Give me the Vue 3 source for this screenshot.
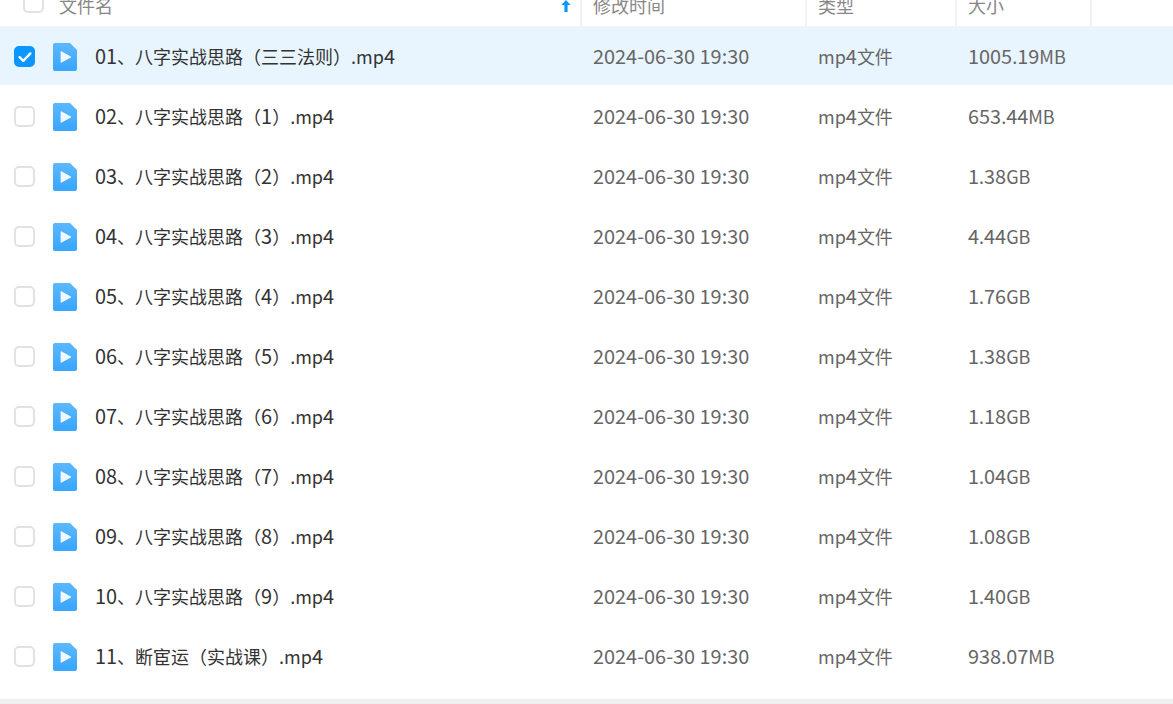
<script setup>
const names = [
  '01、八字实战思路（三三法则）.mp4',
  '02、八字实战思路（1）.mp4',
  '03、八字实战思路（2）.mp4',
  '04、八字实战思路（3）.mp4',
  '05、八字实战思路（4）.mp4',
  '06、八字实战思路（5）.mp4',
  '07、八字实战思路（6）.mp4',
  '08、八字实战思路（7）.mp4',
  '09、八字实战思路（8）.mp4',
  '10、八字实战思路（9）.mp4',
  '11、断宦运（实战课）.mp4'
]
const sizes = ['1005.19MB','653.44MB','1.38GB','4.44GB','1.76GB','1.38GB','1.18GB','1.04GB','1.08GB','1.40GB','938.07MB']
const split = (s) => s.split(/([0-9:\- ]+)/).filter(Boolean).map((t) => ({ t, num: /^[0-9:\- ]/.test(t) }))
const rows = names.map((name, i) => ({ key: name, name: split(name), size: split(sizes[i]), selected: i === 0 }))
const time = split('2024-06-30 19:30')
const type = split('mp4文件')
</script>

<template>
  <div class="page">
    <div class="head">
      <div class="h-name">
        <span class="box head-box"></span>
        <span class="h-label">文件名</span>
        <svg class="sort" width="10" height="12" viewBox="0 0 10 12"><path d="M5 0 L9.6 5 H6.6 V12 H3.4 V5 H.4 Z" fill="#0a97ff"/></svg>
      </div>
      <div class="h-cell w-time">修改时间</div>
      <div class="h-cell w-type">类型</div>
      <div class="h-cell w-size">大小</div>
    </div>
    <div class="list">
      <div v-for="r in rows" :key="r.key" class="row" :class="{ sel: r.selected }">
        <span class="box" :class="{ on: r.selected }">
          <svg v-if="r.selected" width="16" height="14" viewBox="0 0 16 14"><path d="M2.6 7.2 L6.3 10.8 L13.4 3.4" fill="none" stroke="#fff" stroke-width="2.4" stroke-linecap="round" stroke-linejoin="round"/></svg>
        </span>
        <svg class="file" width="24" height="28" viewBox="0 0 24 28">
          <defs><linearGradient id="g" x1="0" y1="0" x2="0" y2="1"><stop offset="0" stop-color="#5cb8ff"/><stop offset="1" stop-color="#38a5ff"/></linearGradient></defs>
          <path d="M2 0 H17 L24 7 V26 a2 2 0 0 1-2 2 H2 a2 2 0 0 1-2-2 V2 a2 2 0 0 1 2-2 Z" fill="url(#g)"/>
          <path d="M8 8.6 L18 14 L8 19.4 Z" fill="#fff" opacity=".92" stroke="#fff" stroke-width=".8" stroke-linejoin="round"/>
        </svg>
        <span class="name"><span v-for="(s, i) in r.name" :key="i" :class="{ num: s.num }">{{ s.t }}</span></span>
        <span class="cell w-time"><span v-for="(s, i) in time" :key="i" :class="{ num: s.num }">{{ s.t }}</span></span>
        <span class="cell w-type"><span v-for="(s, i) in type" :key="i" :class="{ num: s.num }">{{ s.t }}</span></span>
        <span class="cell w-size"><span v-for="(s, i) in r.size" :key="i" :class="{ num: s.num }">{{ s.t }}</span></span>
      </div>
    </div>
    <div class="foot"></div>
  </div>
</template>

<style scoped>
.page { width: 1173px; height: 704px; overflow: hidden; background: #fff; font-family: "Noto Sans CJK SC", "Noto Sans", sans-serif; display: flex; flex-direction: column; }
.head { height: 27px; flex: none; display: flex; overflow: hidden; color: #888; font-size: 18px; line-height: 26px; box-sizing: border-box; border-bottom: 1px solid #f4f4f4; }
.h-name { width: 580px; flex: none; display: flex; align-items: flex-start; position: relative; }
.head-box { margin: -8px 0 0 23px; }
.h-label { margin: -8px 0 0 15px; }
.sort { position: absolute; left: 561px; top: 0; }
.h-cell { box-sizing: border-box; flex: none; border-left: 2px solid #f2f2f2; margin-top: -8px; height: 34px; }
.head .w-time { width: 225px; padding-left: 11px; }
.head .w-type { width: 150px; padding-left: 11px; }
.head .w-size { width: 137px; padding-left: 11px; border-right: 2px solid #f2f2f2; }
.list { display: flex; flex-direction: column; gap: 2px; }
.row { height: 58px; display: flex; align-items: center; flex: none; font-size: 18px; color: #666; }
.num { font-size: 19.9px; }
.row.sel { background: #e8f5fe; }
.box { box-sizing: border-box; width: 21px; height: 21px; border: 2px solid #e2e2e2; border-radius: 5px; background: #fff; flex: none; display: flex; align-items: center; justify-content: center; }
.row .box { margin: 1px 0 0 14px; }
.box.on { background: #0a97ff; border-color: #0a97ff; }
.file { margin: 1px 0 0 18px; flex: none; }
.name { width: 498px; margin-left: 18px; padding-bottom: 2px; flex: none; color: #333; white-space: nowrap; }
.cell { flex: none; white-space: nowrap; box-sizing: border-box; padding-bottom: 2px; }
.row .w-time { width: 225px; }
.row .w-type { width: 150px; }
.foot { height: 5px; margin-top: auto; background: #f0f0f0; flex: none; }
</style>
